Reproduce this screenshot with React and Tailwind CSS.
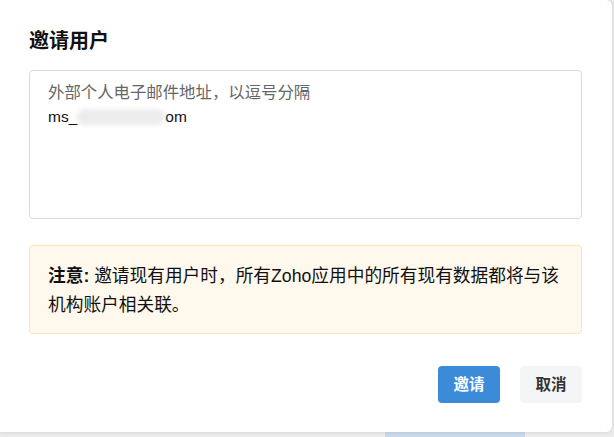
export default function App() {
  const font = { fontFamily: '"Liberation Sans", "Noto Sans CJK SC", sans-serif' };
  return (
    <div className="w-[614px] h-[437px] bg-[#ebebeb] overflow-hidden relative" style={font}>
      <div className="absolute left-[385px] top-[432px] w-[140px] h-[5px] bg-[#c9d9ea]" />
      <div className="relative w-[612px] h-[432px] bg-white rounded-br-[6px] rounded-tr-[6px] shadow-[0_0_4px_rgba(0,0,0,0.12)] flex flex-col pl-[29px] pr-[30px] pt-[27px]">
        <h1 className="text-[20px] leading-[28px] font-bold text-[#111]">邀请用户</h1>
        <div className="mt-[15px] h-[149px] border border-[#d9d9d9] rounded-[4px] px-[18px] pt-[9px]">
          <div className="text-[16.4px] leading-[24px] text-[#666]">外部个人电子邮件地址，以逗号分隔</div>
          <div className="text-[15.5px] leading-[26px] text-[#111] flex items-center">
            <span>ms_</span>
            <span className="inline-block w-[88px] h-[16px] bg-[#ececec] rounded-full blur-[2px]" />
            <span>om</span>
          </div>
        </div>
        <div className="mt-[26px] h-[89px] bg-[#fef8ed] border border-[#fbe4b8] rounded-[4px] px-[18px] pt-[16px] text-[17.7px] leading-[29px] text-[#111]">
          <span className="whitespace-nowrap"><b className="font-bold">注意:</b> 邀请现有用户时，所有Zoho应用中的所有现有数据都将与该</span>
          <br />
          机构账户相关联。
        </div>
        <div className="mt-[32px] flex justify-end gap-[20px]">
          <button className="w-[62px] h-[37px] rounded-[4px] bg-[#3b8bd9] text-white text-[15.5px] font-bold">邀请</button>
          <button className="w-[62px] h-[37px] rounded-[4px] bg-[#f4f5f7] text-[#333] text-[15.5px] font-bold">取消</button>
        </div>
      </div>
    </div>
  );
}
